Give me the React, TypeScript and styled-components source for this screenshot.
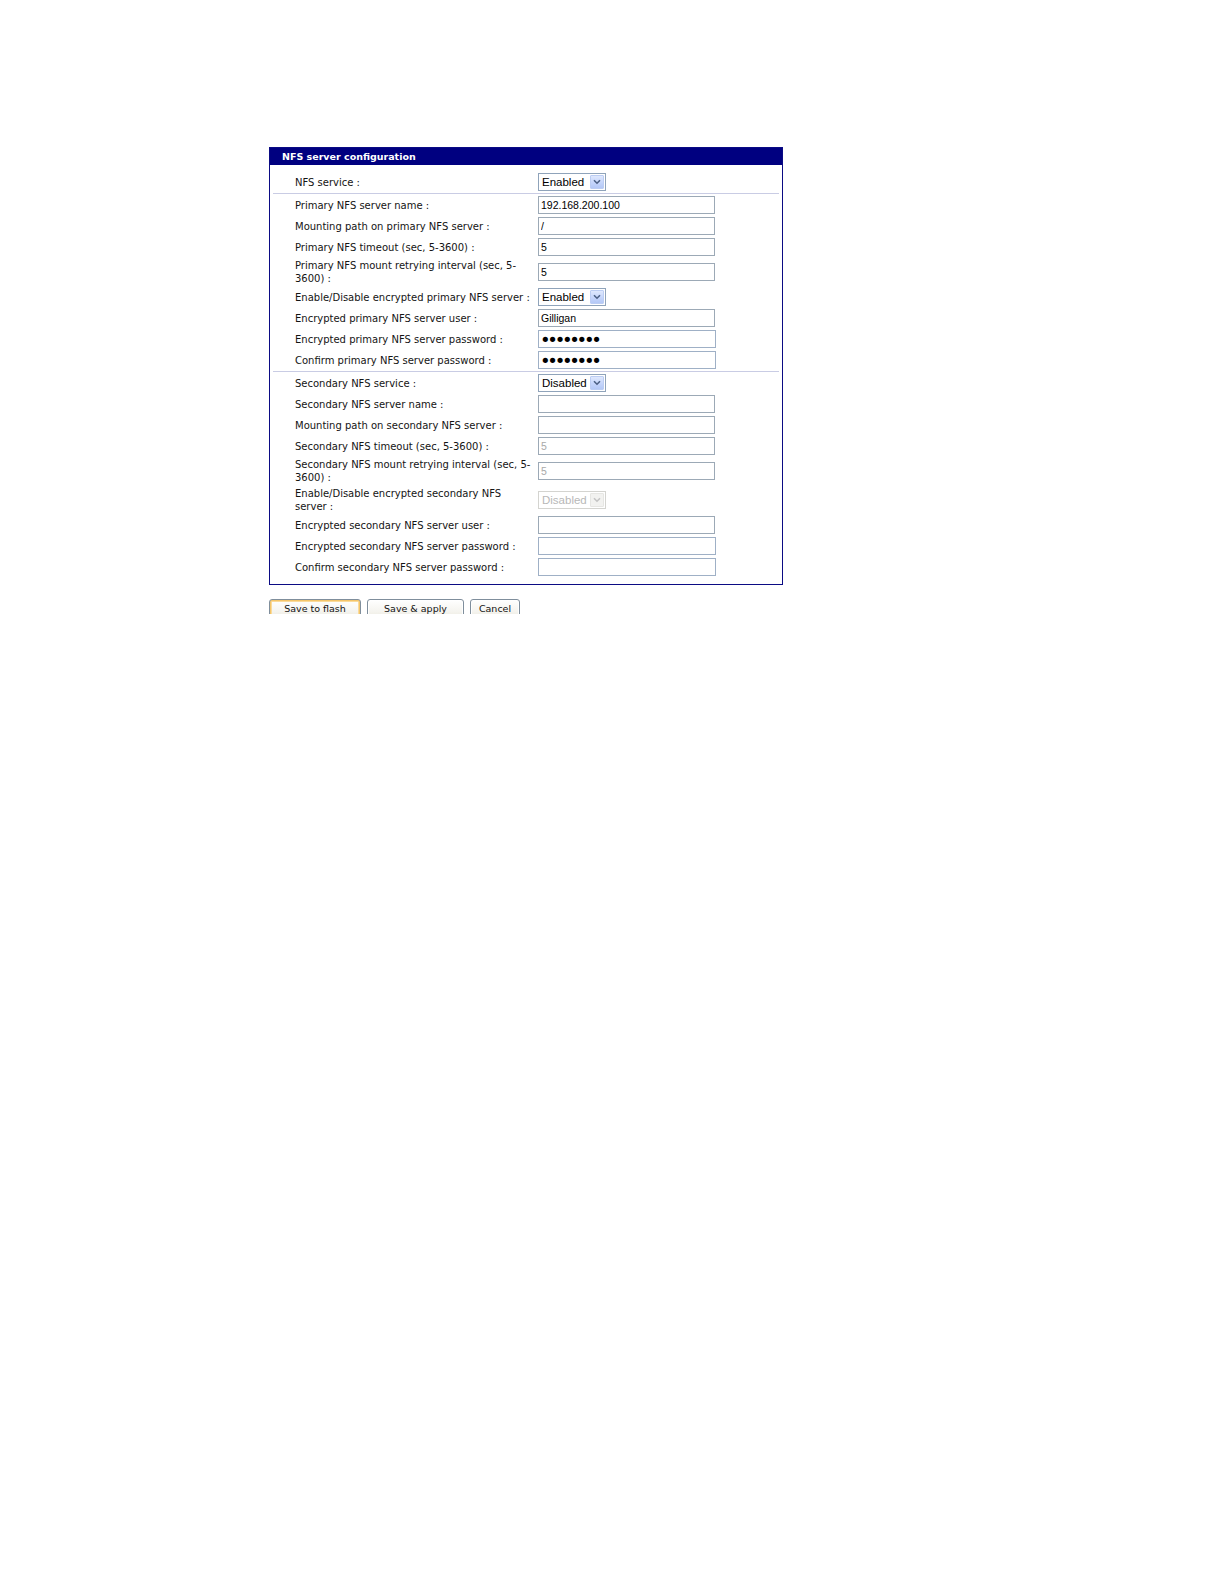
import React from "react";
import styled, { createGlobalStyle } from "styled-components";

const GlobalStyle = createGlobalStyle`
  html, body { margin: 0; padding: 0; background: #ffffff; }
  body { font-family: "DejaVu Sans", Verdana, sans-serif; color: #111; }
  * { box-sizing: border-box; }
`;

const Page = styled.main`
  padding: 147px 0 0 269px;
`;

const Panel = styled.section`
  width: 514px;
  border: 1px solid #0b0b84;
  background: #fff;
`;

const PanelHeader = styled.h2`
  margin: 0;
  height: 17px;
  padding-left: 12px;
  background: #000080;
  color: #ffffff;
  font: bold 9.5px/17px "DejaVu Sans", Verdana, sans-serif;
`;

const PanelBody = styled.div`
  padding: 6.5px 3px 6.5px;
`;

const Section = styled.div<{ $divided?: boolean }>`
  border-top: ${(p) => (p.$divided ? "1px solid #c9cce4" : "none")};
  padding-top: ${(p) => (p.$divided ? "1px" : "0")};
`;

const Row = styled.div`
  display: grid;
  grid-template-columns: 243px 1fr;
  align-items: center;
  min-height: 21px;
  padding-left: 22px;
`;

const Label = styled.label`
  padding: 1.5px 0;
  font: 10px/13px "DejaVu Sans", Verdana, sans-serif;
  color: #141414;
  white-space: nowrap;
`;

const TextInput = styled.input<{ $wide?: boolean }>`
  display: block;
  width: ${(p) => (p.$wide ? 178 : 177)}px;
  height: 18px;
  margin: 0;
  padding: 0 2px;
  border: 1px solid ${(p) => (p.$wide ? "#9fb0c6" : "#9ca9b6")};
  border-radius: 0;
  background: #fff;
  color: #000;
  font: 10.5px "Liberation Sans", Arial, sans-serif;
  outline: none;
  &:disabled {
    color: #a9a9a9;
    background: #fff;
  }
  &[type="password"] {
    padding: 0 1px;
    font: 18px "DejaVu Sans", sans-serif;
    letter-spacing: -3.3px;
  }
`;

const SelectBox = styled.div<{ $disabled?: boolean }>`
  width: 68px;
  height: 18px;
  display: flex;
  align-items: center;
  justify-content: space-between;
  padding: 0 1px 0 3px;
  border: 1px solid ${(p) => (p.$disabled ? "#d4d4d0" : "#8fa3ba")};
  background: #fff;
  color: ${(p) => (p.$disabled ? "#b8b8b8" : "#000")};
  font: 11.5px "Liberation Sans", Arial, sans-serif;
`;

const SelectArrow = styled.span<{ $disabled?: boolean }>`
  width: 14px;
  height: 14px;
  display: flex;
  align-items: center;
  justify-content: center;
  border: 1px solid ${(p) => (p.$disabled ? "#e6e6e3" : "#bccdf3")};
  border-radius: 1px;
  background: ${(p) =>
    p.$disabled
      ? "#f2f2f0"
      : "linear-gradient(180deg, #dfe8fd 0%, #c5d5fb 55%, #b4c8f6 100%)"};
  color: ${(p) => (p.$disabled ? "#c4c4c4" : "#4d6185")};
`;

const ButtonBar = styled.div`
  display: flex;
  gap: 6px;
  margin-top: 14px;
  height: 15px;
  overflow: hidden;
`;

const Button = styled.button<{ $focused?: boolean; $width: number }>`
  width: ${(p) => p.$width}px;
  height: 21px;
  margin: 0;
  padding: 0 0 3px;
  border: 1px solid #7f8e9c;
  border-radius: 3px;
  background: linear-gradient(180deg, #ffffff 0%, #f5f4ef 60%, #ebe8dd 100%);
  color: #111;
  font: 9.5px "DejaVu Sans", Verdana, sans-serif;
  box-shadow: ${(p) =>
    p.$focused
      ? "inset 0 0 0 1px #f4c56a, inset 0 0 0 2px #fadb9c"
      : "inset 0 0 0 1px #ffffff"};
`;

const Chevron = () => (
  <svg width="8" height="6" viewBox="0 0 8 6" aria-hidden="true">
    <path d="M1 1.2 L4 4.2 L7 1.2" fill="none" stroke="currentColor" strokeWidth="1.6" />
  </svg>
);

type SelectProps = { value: string; disabled?: boolean };

const Select = ({ value, disabled }: SelectProps) => (
  <SelectBox $disabled={disabled} role="combobox" aria-disabled={disabled}>
    <span>{value}</span>
    <SelectArrow $disabled={disabled}>
      <Chevron />
    </SelectArrow>
  </SelectBox>
);

type Field =
  | { kind: "text"; label: React.ReactNode; value?: string; disabled?: boolean }
  | { kind: "password"; label: React.ReactNode; value?: string }
  | { kind: "select"; label: React.ReactNode; value: string; disabled?: boolean };

const sections: Field[][] = [
  [{ kind: "select", label: "NFS service :", value: "Enabled" }],
  [
    { kind: "text", label: "Primary NFS server name :", value: "192.168.200.100" },
    { kind: "text", label: "Mounting path on primary NFS server :", value: "/" },
    { kind: "text", label: "Primary NFS timeout (sec, 5-3600) :", value: "5" },
    {
      kind: "text",
      label: (
        <>
          Primary NFS mount retrying interval (sec, 5-
          <br />
          3600) :
        </>
      ),
      value: "5",
    },
    { kind: "select", label: "Enable/Disable encrypted primary NFS server :", value: "Enabled" },
    { kind: "text", label: "Encrypted primary NFS server user :", value: "Gilligan" },
    { kind: "password", label: "Encrypted primary NFS server password :", value: "gilligan" },
    { kind: "password", label: "Confirm primary NFS server password :", value: "gilligan" },
  ],
  [
    { kind: "select", label: "Secondary NFS service :", value: "Disabled" },
    { kind: "text", label: "Secondary NFS server name :" },
    { kind: "text", label: "Mounting path on secondary NFS server :" },
    { kind: "text", label: "Secondary NFS timeout (sec, 5-3600) :", value: "5", disabled: true },
    {
      kind: "text",
      label: (
        <>
          Secondary NFS mount retrying interval (sec, 5-
          <br />
          3600) :
        </>
      ),
      value: "5",
      disabled: true,
    },
    {
      kind: "select",
      label: (
        <>
          Enable/Disable encrypted secondary NFS
          <br />
          server :
        </>
      ),
      value: "Disabled",
      disabled: true,
    },
    { kind: "text", label: "Encrypted secondary NFS server user :" },
    { kind: "password", label: "Encrypted secondary NFS server password :" },
    { kind: "password", label: "Confirm secondary NFS server password :" },
  ],
];

const renderControl = (f: Field) => {
  if (f.kind === "select") return <Select value={f.value} disabled={f.disabled} />;
  if (f.kind === "password")
    return <TextInput $wide type="password" defaultValue={f.value ?? ""} />;
  return <TextInput type="text" defaultValue={f.value ?? ""} disabled={f.disabled} />;
};

export default function App() {
  return (
    <>
      <GlobalStyle />
      <Page>
        <Panel>
          <PanelHeader>NFS server configuration</PanelHeader>
          <PanelBody>
            {sections.map((rows, si) => (
              <Section key={si} $divided={si > 0}>
                {rows.map((f, ri) => (
                  <Row key={ri}>
                    <Label>{f.label}</Label>
                    <div>{renderControl(f)}</div>
                  </Row>
                ))}
              </Section>
            ))}
          </PanelBody>
        </Panel>
        <ButtonBar>
          <Button $focused $width={92}>Save to flash</Button>
          <Button $width={97}>Save &amp; apply</Button>
          <Button $width={50}>Cancel</Button>
        </ButtonBar>
      </Page>
    </>
  );
}
